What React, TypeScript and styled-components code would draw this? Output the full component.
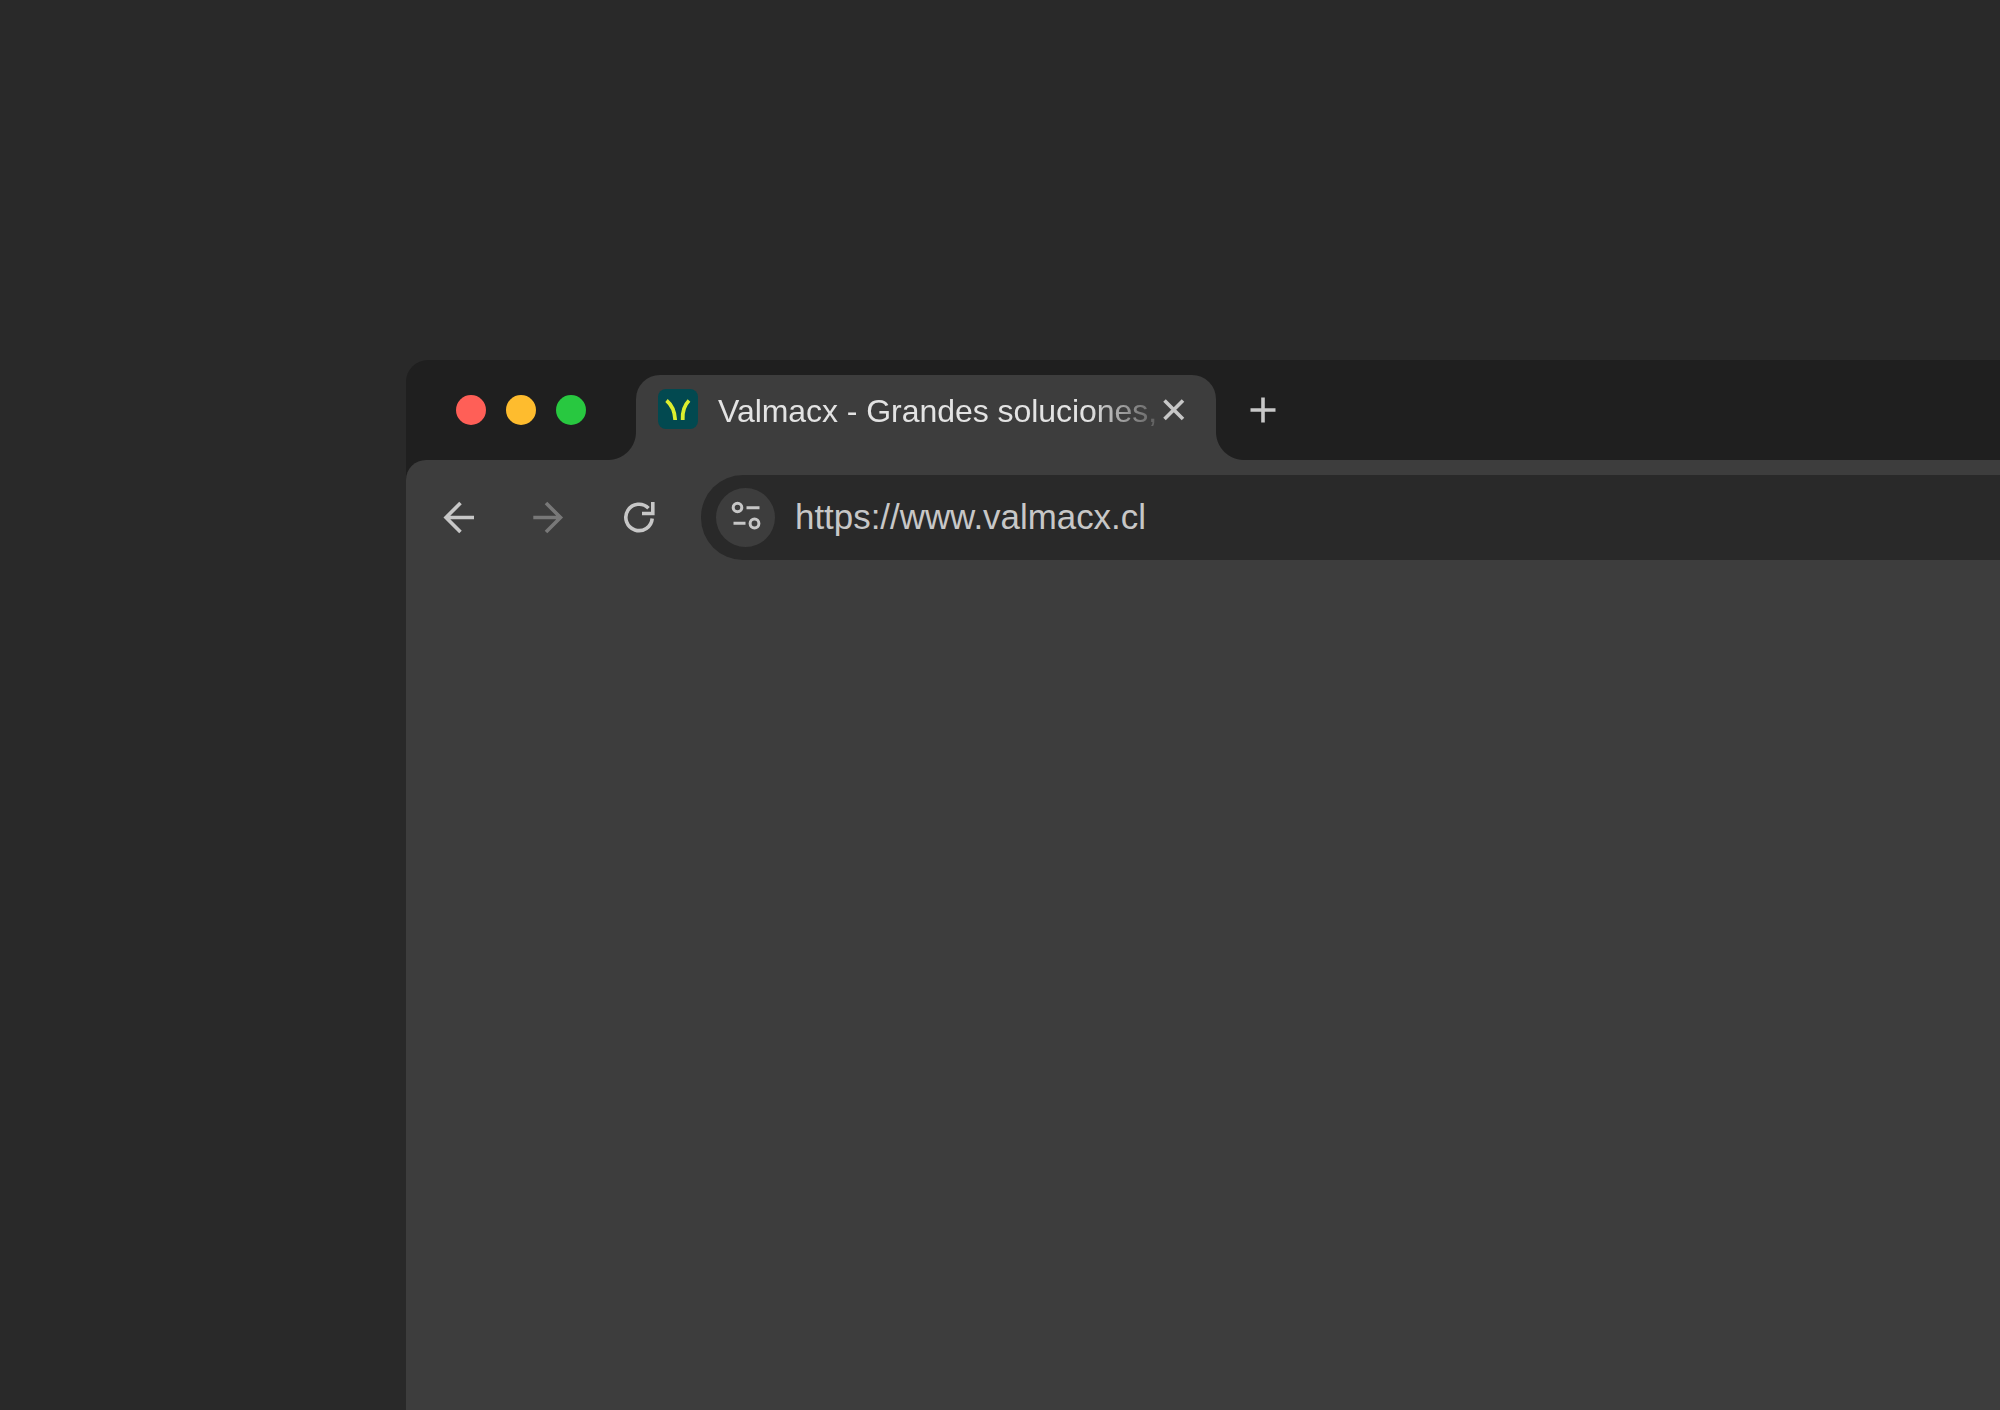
import React from "react";
import styled, { createGlobalStyle } from "styled-components";

const Global = createGlobalStyle`
  html, body { margin: 0; padding: 0; background: #292929; }
  #root { width: 2000px; height: 1410px; overflow: hidden; }
`;

const Page = styled.div`
  width: 2000px;
  height: 1410px;
  box-sizing: border-box;
  padding: 360px 0 0 406px;
  background: #292929;
  font-family: "Liberation Sans", Arial, sans-serif;
`;

const BrowserWindow = styled.div`
  height: 1050px;
  display: flex;
  flex-direction: column;
  background: #1f1f1f;
  border-radius: 22px 0 0 0;
  overflow: hidden;
`;

const TabStrip = styled.div`
  height: 100px;
  flex: none;
  display: flex;
  align-items: flex-end;
`;

const Lights = styled.div`
  width: 230px;
  height: 100px;
  box-sizing: border-box;
  padding-left: 50px;
  display: flex;
  align-items: center;
  gap: 20px;
`;

const Light = styled.span<{ $color: string }>`
  width: 30px;
  height: 30px;
  border-radius: 50%;
  background: ${(p) => p.$color};
`;

const Tab = styled.div`
  position: relative;
  width: 580px;
  height: 85px;
  box-sizing: border-box;
  padding: 14px 0 0 22px;
  display: flex;
  align-items: flex-start;
  background: #3d3d3d;
  border-radius: 24px 24px 0 0;

  &::before,
  &::after {
    content: "";
    position: absolute;
    bottom: 0;
    width: 28px;
    height: 28px;
  }
  &::before {
    left: -28px;
    background: radial-gradient(circle at 0 0, #1f1f1f 27.5px, #3d3d3d 28.5px);
  }
  &::after {
    right: -28px;
    background: radial-gradient(circle at 100% 0, #1f1f1f 27.5px, #3d3d3d 28.5px);
  }
`;

const Favicon = styled.svg`
  width: 40px;
  height: 40px;
  flex: none;
`;

const TabTitle = styled.div`
  width: 440px;
  margin-left: 20px;
  height: 45px;
  font-size: 32px;
  line-height: 45px;
  letter-spacing: -0.05px;
  color: #e3e3e3;
  white-space: nowrap;
  mask-image: linear-gradient(to right, #000 370px, rgba(0, 0, 0, 0.2) 438px);
`;

const CloseIcon = styled.svg`
  width: 26px;
  height: 26px;
  flex: none;
  margin: 8px 0 0 2.5px;
`;

const PlusIcon = styled.svg`
  width: 26px;
  height: 26px;
  flex: none;
  align-self: center;
  margin-left: 34px;
`;

const Toolbar = styled.div`
  flex: 1;
  display: flex;
  align-items: flex-start;
  box-sizing: border-box;
  padding: 15px 0 0 33px;
  gap: 50px;
  background: #3d3d3d;
  border-radius: 20px 0 0 0;
`;

const NavIcon = styled.svg`
  width: 40px;
  height: 40px;
  flex: none;
  margin-top: 22px;
`;

const AddressBar = styled.div`
  flex: 1;
  height: 84.5px;
  margin-left: -8px;
  box-sizing: border-box;
  padding-left: 15px;
  display: flex;
  align-items: center;
  gap: 20px;
  background: #292929;
  border-radius: 42px 0 0 42px;
`;

const SiteButton = styled.div`
  width: 59px;
  height: 59px;
  flex: none;
  border-radius: 50%;
  background: #3d3d3d;
  display: flex;
  align-items: center;
  justify-content: center;
`;

const SiteIcon = styled.svg`
  width: 32px;
  height: 32px;
`;

const Url = styled.div`
  font-size: 34.9px;
  line-height: 40px;
  color: #c7c7c7;
`;

const stroke = { fill: "none", strokeWidth: 3.6 };
const thin = { fill: "none", strokeWidth: 3, stroke: "#c7c7c7" };

export default function App() {
  return (
    <>
      <Global />
      <Page>
        <BrowserWindow>
          <TabStrip>
            <Lights>
              <Light $color="#ff5f57" />
              <Light $color="#febc2e" />
              <Light $color="#28c840" />
            </Lights>
            <Tab>
              <Favicon viewBox="0 0 40 40">
                <rect width="40" height="40" rx="8" fill="#024950" />
                <path d="M8.5 11.5C14 16 16.8 23 17.2 31" fill="none" stroke="#dcee2e" strokeWidth="3.8" />
                <path d="M31 11.5C26.5 16 24.2 23 24.7 31" fill="none" stroke="#dcee2e" strokeWidth="3.8" />
              </Favicon>
              <TabTitle>Valmacx - Grandes soluciones,</TabTitle>
              <CloseIcon viewBox="0 0 26 26">
                <path d="M3.5 3.5L22 22M22 3.5L3.5 22" stroke="#c7c7c7" {...stroke} />
              </CloseIcon>
            </Tab>
            <PlusIcon viewBox="0 0 26 26">
              <path d="M13 0.5V25.5M0.5 13H25.5" stroke="#c7c7c7" {...stroke} />
            </PlusIcon>
          </TabStrip>
          <Toolbar>
            <NavIcon viewBox="0 0 40 40">
              <path d="M21.5 6L7 20.5L21.5 35M7 20.5H35" stroke="#c7c7c7" {...stroke} />
            </NavIcon>
            <NavIcon viewBox="0 0 40 40">
              <path d="M4.3 20.5H31.5M17 6L31.5 20.5L17 35" stroke="#787878" {...stroke} />
            </NavIcon>
            <NavIcon viewBox="0 0 40 40">
              <path d="M29.5 11.2A13.2 13.2 0 1 0 33.2 21.5" stroke="#c7c7c7" {...stroke} />
              <path d="M33.8 5V16.5H23" stroke="#c7c7c7" {...stroke} />
            </NavIcon>
            <AddressBar>
              <SiteButton>
                <SiteIcon viewBox="0 0 32 32">
                  <circle cx="7.5" cy="6.5" r="4.3" {...thin} />
                  <path d="M16.5 6.8H29.5M3.5 22.2H15.5" {...thin} />
                  <circle cx="24.5" cy="22.5" r="4.4" {...thin} />
                </SiteIcon>
              </SiteButton>
              <Url>https://www.valmacx.cl</Url>
            </AddressBar>
          </Toolbar>
        </BrowserWindow>
      </Page>
    </>
  );
}
